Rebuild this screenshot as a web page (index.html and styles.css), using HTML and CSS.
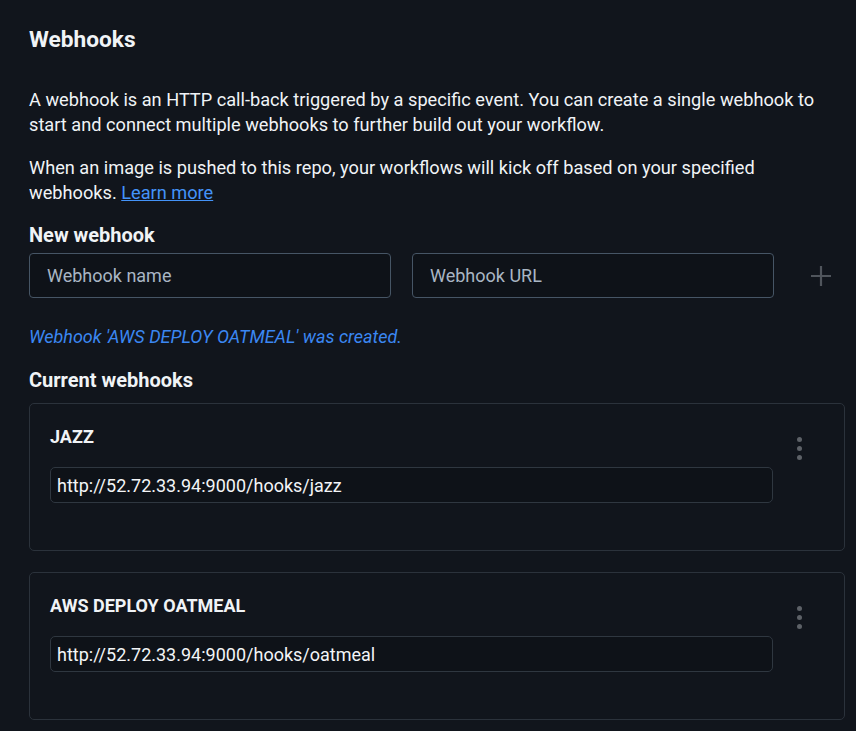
FILE: index.html
```html
<!DOCTYPE html>
<html lang="en">
<head>
<meta charset="utf-8">
<title>Webhooks</title>
<link rel="stylesheet" href="styles.css">
</head>
<body>
<main class="page">
  <h1 class="title">Webhooks</h1>
  <p class="text">A webhook is an HTTP call-back triggered by a specific event. You can create a single webhook to start and connect multiple webhooks to further build out your workflow.</p>
  <p class="text text-second">When an image is pushed to this repo, your workflows will kick off based on your specified webhooks. <a class="link" href="#">Learn more</a></p>

  <h2 class="subhead">New webhook</h2>
  <div class="new-row">
    <input class="field" type="text" placeholder="Webhook name">
    <input class="field" type="text" placeholder="Webhook URL">
    <button class="add-btn" type="button" aria-label="Add webhook">
      <svg width="22" height="22" viewBox="0 0 22 22"><path d="M11 1v20M1 11h20" stroke="#50555c" stroke-width="2.2" fill="none"/></svg>
    </button>
  </div>

  <p class="notice">Webhook 'AWS DEPLOY OATMEAL' was created.</p>

  <h2 class="subhead subhead-current">Current webhooks</h2>
  <div class="cards">
    <section class="card">
      <div class="card-body">
        <h3 class="card-title">JAZZ</h3>
        <input class="url" type="text" value="http://52.72.33.94:9000/hooks/jazz">
      </div>
      <div class="kebab"><span></span><span></span><span></span></div>
    </section>
    <section class="card">
      <div class="card-body">
        <h3 class="card-title">AWS DEPLOY OATMEAL</h3>
        <input class="url" type="text" value="http://52.72.33.94:9000/hooks/oatmeal">
      </div>
      <div class="kebab"><span></span><span></span><span></span></div>
    </section>
  </div>
</main>
</body>
</html>
```

FILE: styles.css
```css
html, body {
  margin: 0;
  padding: 0;
  background: #11151c;
}
body {
  font-family: Roboto, "Liberation Sans", sans-serif;
  color: #f0f3f6;
  overflow: hidden;
}
.page {
  padding: 27px 12px 0 29px;
}
.title {
  margin: 0;
  font-size: 22.7px;
  font-weight: 700;
  line-height: 26px;
}
.text {
  margin: 34px 0 0;
  max-width: 792px;
  font-size: 18.2px;
  line-height: 25px;
}
.text-second {
  margin-top: 18px;
}
.link {
  color: #4493f8;
  text-decoration: underline;
}
.subhead {
  margin: 18px 0 0;
  font-size: 20px;
  font-weight: 700;
  line-height: 25px;
}
.new-row {
  margin-top: 5px;
  display: flex;
  align-items: center;
  gap: 21px;
}
.field {
  box-sizing: border-box;
  width: 362px;
  height: 45px;
  padding: 0 17px;
  background: #0e1218;
  border: 1px solid #465565;
  border-radius: 4px;
  font-family: Roboto, "Liberation Sans", sans-serif;
  font-size: 18px;
  color: #f0f3f6;
}
.field::placeholder {
  color: #a9b6c4;
}
.add-btn {
  margin-left: 15px;
  padding: 0;
  border: 0;
  background: none;
  width: 22px;
  height: 22px;
  display: flex;
}
.notice {
  margin: 26px 0 0;
  font-size: 18px;
  line-height: 25px;
  font-style: italic;
  color: #3b87f2;
}
.subhead-current {
  margin-top: 19px;
}
.cards {
  margin-top: 10px;
  display: flex;
  flex-direction: column;
  gap: 21px;
}
.card {
  box-sizing: border-box;
  width: 816px;
  height: 148px;
  display: flex;
  padding: 20px 19px 0 20px;
  border: 1px solid #2b323b;
  border-radius: 5px;
}
.card-body {
  flex: 1;
  display: flex;
  flex-direction: column;
}
.card-title {
  margin: 0;
  font-size: 18px;
  font-weight: 700;
  line-height: 25px;
}
.url {
  box-sizing: border-box;
  margin-top: 18px;
  height: 36px;
  width: 100%;
  padding: 0 6px;
  background: #0e1218;
  border: 1px solid #2f3740;
  border-radius: 5px;
  font-family: Roboto, "Liberation Sans", sans-serif;
  font-size: 18px;
  color: #f3f5f7;
}
.kebab {
  width: 52px;
  display: flex;
  flex-direction: column;
  align-items: center;
  gap: 4px;
  padding-top: 13px;
}
.kebab span {
  width: 5px;
  height: 5px;
  border-radius: 50%;
  background: #5d6167;
}
```
